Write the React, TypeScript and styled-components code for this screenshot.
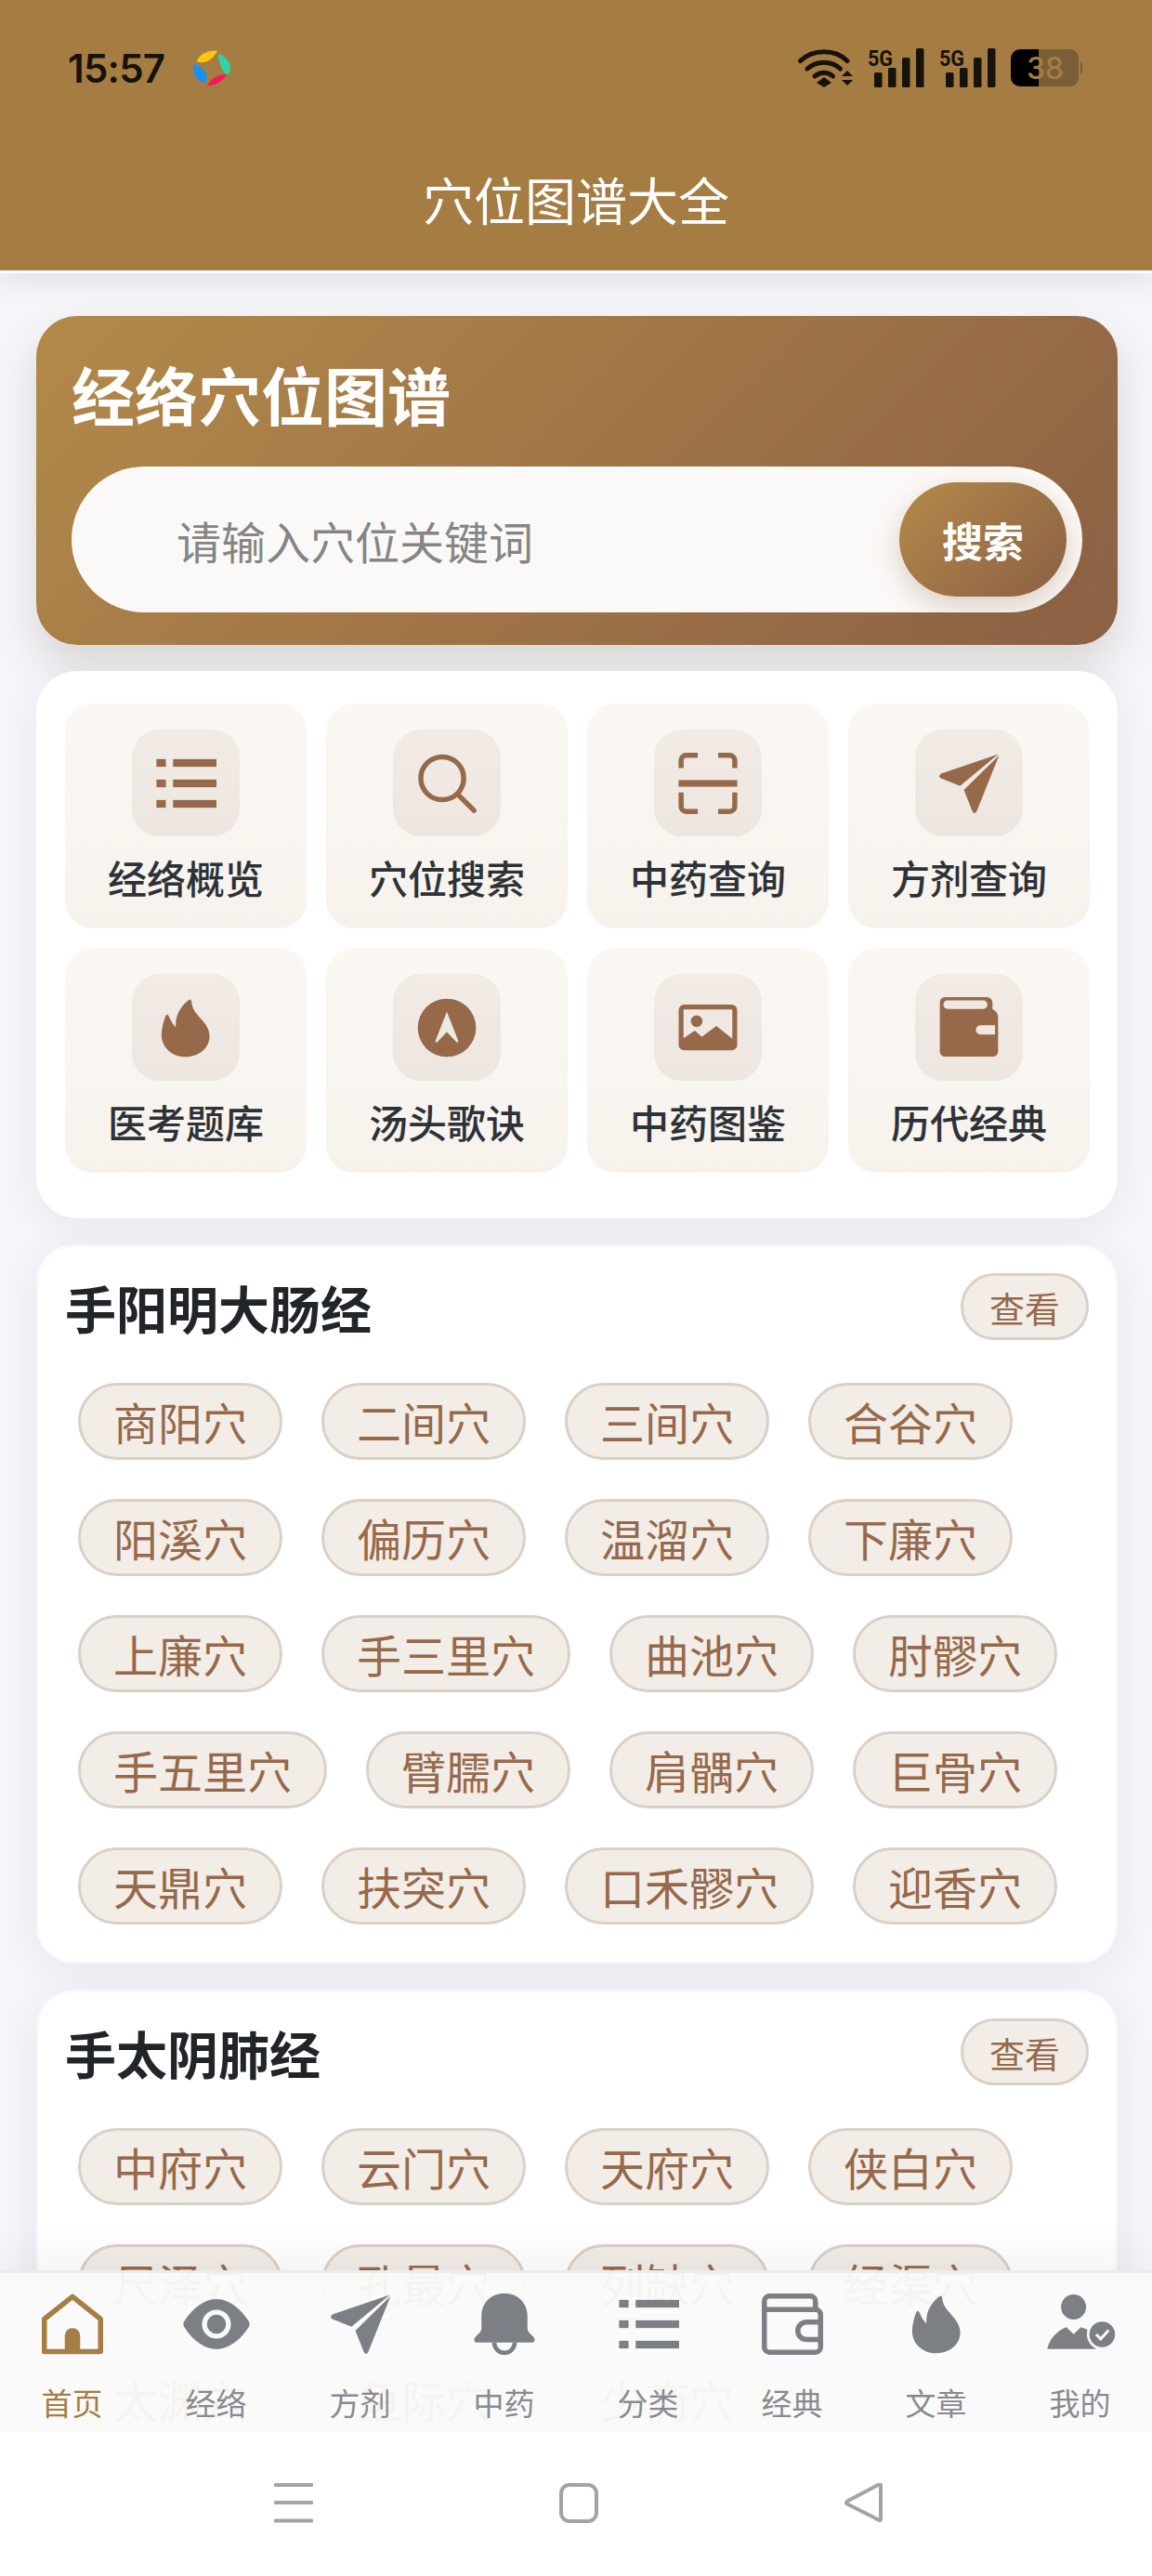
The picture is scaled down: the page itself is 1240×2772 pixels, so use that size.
import React from "react";
import styled, { createGlobalStyle } from "styled-components";

const FONT = `"Noto Sans CJK SC", "Noto Sans", sans-serif`;
const BROWN = "#96694b";

const Global = createGlobalStyle`
  html, body { margin: 0; padding: 0; background: #f5f6fa; }
  * { box-sizing: border-box; }
`;

const Phone = styled.div`
  position: relative;
  width: 1240px;
  height: 2772px;
  overflow: hidden;
  display: flex;
  flex-direction: column;
  background: #f5f6fa;
  font-family: ${FONT};
`;

const Header = styled.header`
  flex: none;
  height: 294px;
  background: #a57d42;
  border-bottom: 3px solid #fff;
  box-shadow: 0 6px 30px rgba(0, 0, 0, 0.1);
  position: relative;
  z-index: 2;
`;

const StatusRow = styled.div`
  height: 146px;
  display: flex;
  align-items: center;
  padding: 0 75px 0 73px;
`;

const Clock = styled.span`
  font-family: Inter, Roboto, sans-serif;
  font-size: 42px;
  font-weight: 600;
  letter-spacing: -0.8px;
  color: #17120a;
`;

const AppLogo = styled.svg`
  width: 40px;
  height: 40px;
  margin-left: 31px;
`;

const StatusIcons = styled.div`
  margin-left: auto;
  display: flex;
  align-items: center;
`;

const PageTitle = styled.h1`
  margin: 0;
  height: 134px;
  line-height: 134px;
  text-align: center;
  font-size: 55px;
  font-weight: 400;
  color: #fff;
`;

const Main = styled.main`
  flex: 1;
  min-height: 0;
  overflow: hidden;
  padding: 46px 37px 0 39px;
  display: flex;
  flex-direction: column;
`;

const Hero = styled.section`
  flex: none;
  height: 354px;
  padding: 40px 38px 0;
  border-radius: 44px;
  background: linear-gradient(135deg, #b38a49 0%, #8b6045 100%);
  box-shadow: 0 22px 44px rgba(110, 85, 70, 0.2);
`;

const HeroTitle = styled.h2`
  margin: 0 0 34px;
  line-height: 88px;
  font-size: 68px;
  font-weight: 700;
  color: #fff;
`;

const SearchBox = styled.div`
  height: 157px;
  display: flex;
  align-items: center;
  justify-content: space-between;
  padding: 0 17px 0 113px;
  border-radius: 79px;
  background: #fbf9f7;
`;

const Placeholder = styled.span`
  font-size: 48px;
  color: #858585;
`;

const SearchButton = styled.button`
  width: 180px;
  height: 123px;
  border: 0;
  padding: 0;
  border-radius: 62px;
  font-family: ${FONT};
  font-size: 44px;
  font-weight: 700;
  color: #fff;
  background: linear-gradient(135deg, #b38a49 0%, #8b6045 100%);
  box-shadow: 0 10px 30px rgba(139, 94, 60, 0.28);
`;

const MenuCard = styled.nav`
  flex: none;
  margin-top: 28px;
  padding: 35px 31px 49px;
  border-radius: 44px;
  background: #fff;
  box-shadow: 0 8px 40px rgba(30, 40, 70, 0.07);
  display: grid;
  grid-template-columns: repeat(4, 260px);
  gap: 21px;
`;

const Tile = styled.a`
  height: 242px;
  padding-top: 28px;
  border-radius: 30px;
  background: linear-gradient(180deg, #fbf8f4 0%, #f7f2ec 100%);
  display: flex;
  flex-direction: column;
  align-items: center;
`;

const TileIcon = styled.span`
  --hole: #efe8e2;
  width: 116px;
  height: 115px;
  border-radius: 30px;
  background: linear-gradient(180deg, #f2ebe6 0%, #eee6df 100%);
  color: ${BROWN};
  display: flex;
  align-items: center;
  justify-content: center;
`;

const TileLabel = styled.span`
  margin-top: 14px;
  line-height: 60px;
  font-size: 42px;
  font-weight: 500;
  color: #2d3238;
`;

const Glyph = styled.svg`
  width: 66px;
  height: 66px;
  overflow: visible;
  display: block;
`;

const MeridianCard = styled.section`
  flex: none;
  margin-top: 28px;
  padding: 28px 28px 39px;
  border: 3px solid rgba(255, 255, 255, 0.5);
  border-radius: 40px;
  background: #fff;
  background-clip: padding-box;
  box-shadow: 0 8px 40px rgba(30, 40, 70, 0.07);
`;

const CardHead = styled.div`
  display: flex;
  align-items: center;
  justify-content: space-between;
`;

const CardTitle = styled.h3`
  margin: 0;
  font-size: 55px;
  line-height: 72px;
  font-weight: 700;
  color: #212529;
`;

const ViewButton = styled.span`
  width: 138px;
  height: 72px;
  border: 3px solid #dad0c8;
  border-radius: 36px;
  background: #f3ede8;
  color: ${BROWN};
  font-size: 38px;
  display: flex;
  align-items: center;
  justify-content: center;
`;

const PointList = styled.div`
  margin-top: 46px;
  padding: 0 14px;
  display: flex;
  flex-wrap: wrap;
  gap: 42px;
`;

const Point = styled.span`
  height: 83px;
  padding: 0 35px;
  border: 3px solid #dad0c8;
  border-radius: 42px;
  background: #f3ede8;
  color: ${BROWN};
  font-size: 48px;
  line-height: 77px;
  white-space: nowrap;
`;

const TabBar = styled.div`
  position: absolute;
  left: 0;
  right: 0;
  bottom: 155px;
  height: 174px;
  border-top: 3px solid #ececec;
  background: rgba(250, 250, 250, 0.96);
  box-shadow: 0 -10px 50px rgba(0, 0, 0, 0.06);
  display: grid;
  grid-template-columns: repeat(8, 1fr);
`;

const Tab = styled.a<{ $active?: boolean }>`
  --hole: #f9f9f9;
  padding-top: 22px;
  display: flex;
  flex-direction: column;
  align-items: center;
  color: ${(p) => (p.$active ? "#a67d42" : "#7c8085")};
`;

const TabLabel = styled.span<{ $active?: boolean }>`
  margin-top: 28px;
  line-height: 46px;
  font-size: 33px;
  color: ${(p) => (p.$active ? "#a67d42" : "#878b90")};
`;

const SystemNav = styled.div`
  flex: none;
  height: 155px;
  position: relative;
  z-index: 3;
  background: #fff;
  display: flex;
  justify-content: center;
  gap: 265px;
  padding: 55px 0 0 6px;
`;

const SysIcon = styled.svg`
  width: 42px;
  height: 44px;
  display: block;
`;

/* ---- icons ---- */
const Path = ({ d }: { d: string }) => <path d={d} fill="currentColor" />;

const FIRE =
  "M13.2 1.1Q13.9.5 14.2 1.6C14.5 5 16.3 6.5 18 8.5C20 10.6 21.3 12.8 21.3 15.4C21.3 20 17 23.4 12 23.4C6.8 23.4 2.5 19.8 2.5 14.8C2.5 12 3.3 9.5 4 7.5Q4.6 6.2 5.3 7.4C6 8.8 6.8 10.8 8.1 11.7C7.8 7.5 9.5 4 13.2 1.1Z";

const ListIcon = () => (
  <Glyph viewBox="0 0 24 24">
    {[2.5, 10.5, 18.5].map((y) => (
      <g key={y} fill="currentColor">
        <rect x="0.5" y={y} width="3.7" height="3" />
        <rect x="7" y={y} width="17" height="3" />
      </g>
    ))}
  </Glyph>
);

const SearchIcon = () => (
  <Glyph viewBox="0 0 24 24" fill="none" stroke="currentColor" strokeWidth="2" strokeLinecap="round">
    <circle cx="10.2" cy="10" r="8.4" />
    <path d="M16.4 16.4L22.6 22.6" />
  </Glyph>
);

const ScanIcon = () => (
  <Glyph viewBox="0 0 24 24">
    <path
      d="M1.5 6V3a2 2 0 0 1 2-2h4.5M22.5 6V3a2 2 0 0 0-2-2H16M1.5 15.5V21a2 2 0 0 0 2 2H8M22.5 15.5V21a2 2 0 0 1-2 2H16"
      fill="none"
      stroke="currentColor"
      strokeWidth="2"
    />
    <rect x="0.5" y="10.7" width="23" height="2.6" fill="currentColor" />
  </Glyph>
);

const PlaneIcon = () => (
  <Glyph viewBox="0 0 24 24">
    <Path d="M23.5.5L1 8.2Q-.2 9.3 1 10L8.5 13Z" />
    <Path d="M23.8 1L10 14.5L13.3 22.8Q14 24.3 15 23Z" />
  </Glyph>
);

const FireIcon = () => (
  <Glyph viewBox="0 0 24 24">
    <Path d={FIRE} />
  </Glyph>
);

const CompassIcon = () => (
  <Glyph viewBox="0 0 24 24">
    <circle cx="12" cy="12" r="11.4" fill="currentColor" />
    <path d="M12 5.7L16.5 17.2Q16.5 18 15.8 17.6L12 13.6L8.2 17.6Q7.5 18 7.5 17.2Z" fill="var(--hole)" />
  </Glyph>
);

const ImageIcon = () => (
  <Glyph viewBox="0 0 24 24">
    <rect x="1.5" y="3.9" width="21" height="16" rx="1.2" fill="none" stroke="currentColor" strokeWidth="1.9" />
    <circle cx="7.6" cy="9.4" r="2.3" fill="currentColor" />
    <Path d="M2 16.4L6.9 13.1L9.6 15.5L15.3 11.3L22 16.6V20H2Z" />
  </Glyph>
);

const WalletFillIcon = () => (
  <Glyph viewBox="0 0 24 24">
    <Path d="M2.6 0H19a2.2 2.2 0 0 1 2.2 2.2V4.6L22.2 5.4Q23.4 6.3 23.4 8V21.3A2 2 0 0 1 21.4 23.3H2.6A2 2 0 0 1 .6 21.3V2A2 2 0 0 1 2.6 0Z" />
    <rect x="2" y="1.3" width="17.2" height="3.3" rx="1.6" fill="var(--hole)" />
    <path d="M16.5 11H22.2V14.6H16.5A1.8 1.8 0 0 1 16.5 11Z" fill="var(--hole)" />
  </Glyph>
);

const HomeIcon = () => (
  <Glyph viewBox="0 0 24 24">
    <path d="M12 1.2L1 10V22.7H23V10Z" fill="none" stroke="currentColor" strokeWidth="2" strokeLinejoin="round" />
    <Path d="M9 23V16.5a3 3 0 0 1 6 0V23Z" />
  </Glyph>
);

const EyeIcon = () => (
  <Glyph viewBox="0 0 24 24">
    <Path d="M-.7 11C3 5 8 2.2 12 2.2S21 5 24.7 11Q25.2 12 24.7 13C21 19 16 21.8 12 21.8S3 19 -.7 13Q-1.2 12-.7 11Z" />
    <circle cx="12" cy="12" r="4.7" fill="currentColor" stroke="var(--hole)" strokeWidth="1.9" />
  </Glyph>
);

const BellIcon = () => (
  <Glyph viewBox="0 0 24 24">
    <Path d="M12 0C6.5 0 3 3.8 3 9V13.5C3 15 1.8 15.8.8 16.8C-.3 18 0 19.2 1.5 19.2H22.5C24 19.2 24.3 18 23.2 16.8C22.2 15.8 21 15 21 13.5V9C21 3.8 17.5 0 12 0Z" />
    <path d="M8 19.2a4 4 0 0 0 8 0" fill="none" stroke="currentColor" strokeWidth="1.7" />
  </Glyph>
);

const WalletLineIcon = () => (
  <Glyph viewBox="0 0 24 24">
    <path
      d="M21 6.3V3a2 2 0 0 0-2-2H3a2 2 0 0 0-2 2V21a2 2 0 0 0 2 2H21a2 2 0 0 0 2-2V8.3a2 2 0 0 0-2-2H1M23 11.2H17.5a3.4 3.4 0 0 0 0 6.8H23"
      fill="none"
      stroke="currentColor"
      strokeWidth="2"
    />
  </Glyph>
);

const UserCheckIcon = () => (
  <Glyph viewBox="0 0 24 24">
    <circle cx="9.3" cy="5.3" r="4.9" fill="currentColor" />
    <Path d="M-1 21.7C0 17.5 3 14.5 6.5 13.2L9.3 15.9L12.2 13.2C14.5 14 16.5 15 18 16V21.7Z" />
    <circle cx="20.5" cy="16" r="6" fill="var(--hole)" />
    <circle cx="20.5" cy="16" r="5" fill="currentColor" />
    <path d="M18.2 16L19.9 17.8L23 14.4" fill="none" stroke="var(--hole)" strokeWidth="1.1" />
  </Glyph>
);

const WifiIcon = () => (
  <svg width="59" height="41" viewBox="0 0 59 41" style={{ marginRight: 17 }}>
    <g fill="none" stroke="#17120a" strokeWidth="5" strokeLinecap="round">
      <path d="M2.5 12.5C16 -0.5 40 -0.5 53 12.5" />
      <path d="M10 21C20 12 36 12 45.5 21" />
      <path d="M18 29C24 24 32 24 37.5 29" />
    </g>
    <path d="M28 30L36 36L28 41L20 36Z" fill="#17120a" />
    <path d="M53 23L59 29H47ZM47 33H59L53 39Z" fill="#17120a" />
  </svg>
);

const SignalLabel = styled.text`
  font-family: Roboto, sans-serif;
  font-size: 23px;
  font-weight: 700;
  fill: #17120a;
`;

const SignalIcon = () => (
  <svg width="60" height="44" viewBox="0 0 60 44" style={{ marginRight: 17 }}>
    <SignalLabel x="-1" y="20" textLength="27" lengthAdjust="spacingAndGlyphs">
      5G
    </SignalLabel>
    <g fill="#17120a">
      <rect x="6" y="27" width="8.5" height="16" rx="1.5" />
      <rect x="21" y="22" width="8.5" height="21" rx="1.5" />
      <rect x="36" y="11" width="8.5" height="32" rx="1.5" />
      <rect x="51" y="1" width="8.5" height="42" rx="1.5" />
    </g>
  </svg>
);

const BatteryLabel = styled.text`
  font-family: Inter, Roboto, sans-serif;
  font-size: 32px;
  font-weight: 500;
  fill: #a57d42;
`;

const BatteryIcon = () => (
  <svg width="77" height="40" viewBox="0 0 77 40" style={{ marginLeft: -1 }}>
    <path d="M30 0H64a9 9 0 0 1 9 9V31a9 9 0 0 1-9 9H30Z" fill="#7a5e36" />
    <path d="M75 13q2 1 2 3v8q0 2-2 3Z" fill="#7a5e36" />
    <path d="M10 0H30V40H10A10 10 0 0 1 0 30V10A10 10 0 0 1 10 0Z" fill="#000" />
    <BatteryLabel x="17" y="32">
      38
    </BatteryLabel>
  </svg>
);

const logo = (
  <AppLogo viewBox="0 0 40 40">
    <path d="M4 13C6 6 14 1 26 1.5C24 6 20 11 15 13C11 14.5 7 15 4 13Z" fill="#fdc50f" />
    <path d="M27 5C33 6 40 13 40 20C40 24 39 27 36 27C32 25 27 15 27 5Z" fill="#2fd4a8" />
    <path d="M1 16C5 16 12 20 15 30C14 35 13 36 12 36C5 35 0 28 0 20Z" fill="#1d8ff0" />
    <path d="M15 39C20 30 28 27 36 27C33 33 24 40 15 39Z" fill="#f8175f" />
  </AppLogo>
);

const tiles = [
  { label: "经络概览", icon: <ListIcon /> },
  { label: "穴位搜索", icon: <SearchIcon /> },
  { label: "中药查询", icon: <ScanIcon /> },
  { label: "方剂查询", icon: <PlaneIcon /> },
  { label: "医考题库", icon: <FireIcon /> },
  { label: "汤头歌诀", icon: <CompassIcon /> },
  { label: "中药图鉴", icon: <ImageIcon /> },
  { label: "历代经典", icon: <WalletFillIcon /> },
];

const meridians = [
  {
    name: "手阳明大肠经",
    points: "商阳穴 二间穴 三间穴 合谷穴 阳溪穴 偏历穴 温溜穴 下廉穴 上廉穴 手三里穴 曲池穴 肘髎穴 手五里穴 臂臑穴 肩髃穴 巨骨穴 天鼎穴 扶突穴 口禾髎穴 迎香穴",
  },
  {
    name: "手太阴肺经",
    points: "中府穴 云门穴 天府穴 侠白穴 尺泽穴 孔最穴 列缺穴 经渠穴 太渊穴 鱼际穴 少商穴",
  },
];

const tabs = [
  { label: "首页", icon: <HomeIcon />, active: true },
  { label: "经络", icon: <EyeIcon /> },
  { label: "方剂", icon: <PlaneIcon /> },
  { label: "中药", icon: <BellIcon /> },
  { label: "分类", icon: <ListIcon /> },
  { label: "经典", icon: <WalletLineIcon /> },
  { label: "文章", icon: <FireIcon /> },
  { label: "我的", icon: <UserCheckIcon /> },
];

export default function App() {
  return (
    <Phone>
      <Global />
      <Header>
        <StatusRow>
          <Clock>15:57</Clock>
          {logo}
          <StatusIcons>
            <WifiIcon />
            <SignalIcon />
            <SignalIcon />
            <BatteryIcon />
          </StatusIcons>
        </StatusRow>
        <PageTitle>穴位图谱大全</PageTitle>
      </Header>

      <Main>
        <Hero>
          <HeroTitle>经络穴位图谱</HeroTitle>
          <SearchBox>
            <Placeholder>请输入穴位关键词</Placeholder>
            <SearchButton>搜索</SearchButton>
          </SearchBox>
        </Hero>

        <MenuCard>
          {tiles.map((t) => (
            <Tile key={t.label}>
              <TileIcon>{t.icon}</TileIcon>
              <TileLabel>{t.label}</TileLabel>
            </Tile>
          ))}
        </MenuCard>

        {meridians.map((m) => (
          <MeridianCard key={m.name}>
            <CardHead>
              <CardTitle>{m.name}</CardTitle>
              <ViewButton>查看</ViewButton>
            </CardHead>
            <PointList>
              {m.points.split(" ").map((p) => (
                <Point key={p}>{p}</Point>
              ))}
            </PointList>
          </MeridianCard>
        ))}
      </Main>

      <TabBar>
        {tabs.map((t) => (
          <Tab key={t.label} $active={t.active}>
            {t.icon}
            <TabLabel $active={t.active}>{t.label}</TabLabel>
          </Tab>
        ))}
      </TabBar>

      <SystemNav>
        <SysIcon viewBox="0 0 42 44">
          <g fill="#a3a3a3">
            <rect y="0" width="42" height="4" rx="1" />
            <rect y="19" width="42" height="4" rx="1" />
            <rect y="38.5" width="42" height="4" rx="1" />
          </g>
        </SysIcon>
        <SysIcon viewBox="0 0 42 44">
          <rect x="2" y="2" width="38" height="39" rx="9" fill="none" stroke="#a3a3a3" strokeWidth="4" />
        </SysIcon>
        <SysIcon viewBox="0 0 42 44">
          <path d="M39 2.5V38.5Q39 41 37 39.8L3 22.5Q1 21 3 19.5L37 1.6Q39 .8 39 2.5Z" fill="none" stroke="#a3a3a3" strokeWidth="4" strokeLinejoin="round" />
        </SysIcon>
      </SystemNav>
    </Phone>
  );
}
